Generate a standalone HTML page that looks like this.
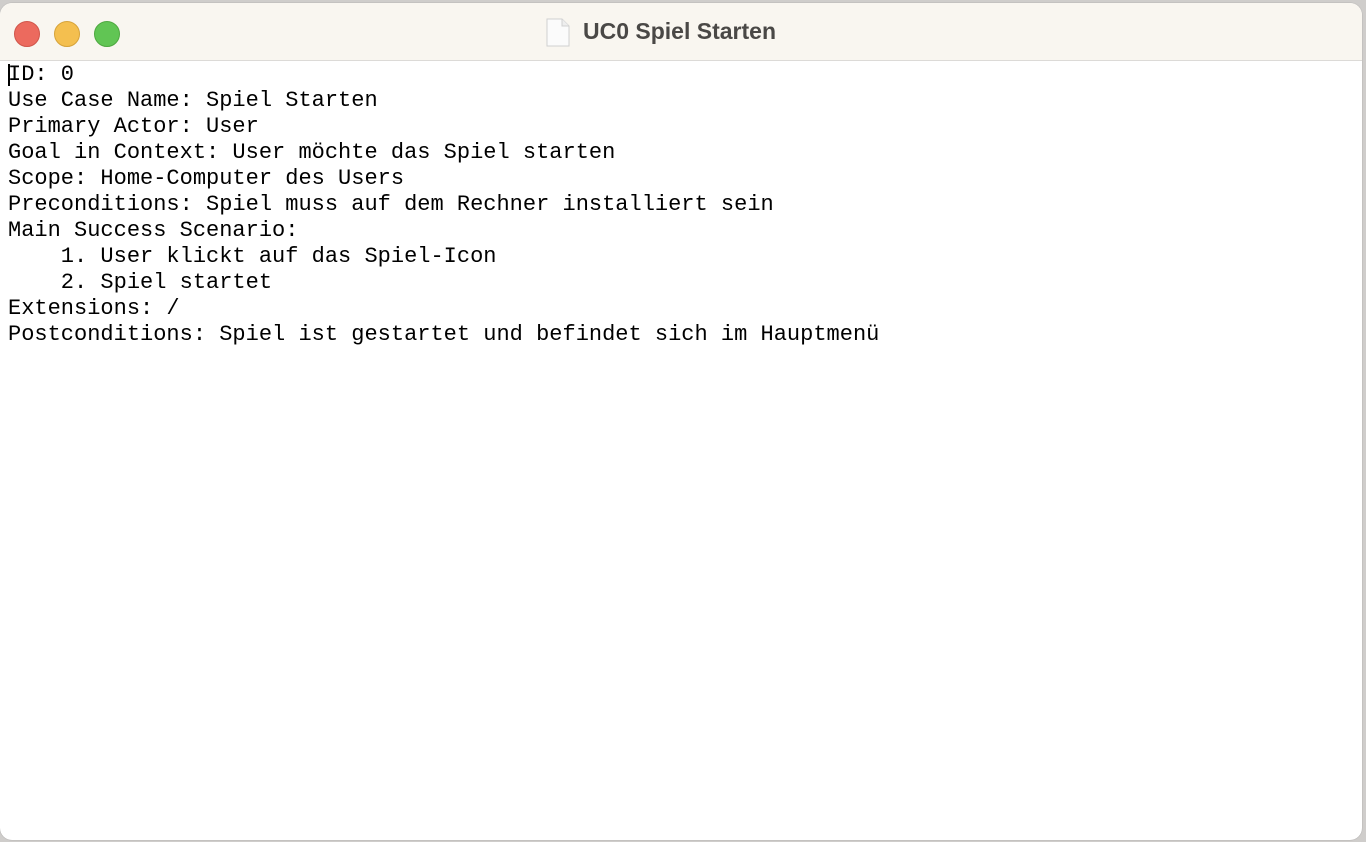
<!DOCTYPE html>
<html><head><meta charset="utf-8"><style>
html,body{margin:0;padding:0;width:1366px;height:842px;overflow:hidden;background:#cfcdcb;}
.win{position:absolute;left:0;top:3px;width:1362px;height:837px;background:#fff;border-radius:12px;overflow:hidden;box-shadow:0 0 1px #888;}
.tb{position:absolute;left:0;top:0;width:100%;height:57px;background:#f9f6f0;border-bottom:1px solid #dcdad7;}
.dot{position:absolute;top:18px;width:24px;height:24px;border-radius:50%;}
.title{position:absolute;left:583px;top:15px;font:bold 23px "Liberation Sans",sans-serif;color:#4a4846;}
.doc{position:absolute;left:546px;top:15px;width:24px;height:29px;}
pre{position:absolute;left:8px;top:59px;margin:0;font:22px/26px "Liberation Mono",monospace;color:#000;}
.caret{position:absolute;left:8px;top:61px;width:2px;height:22px;background:#000;}
</style></head><body>
<div class="win">
<div class="tb">
<div class="dot" style="left:14px;background:#ec6a5e;border:0.5px solid #d0564b"></div>
<div class="dot" style="left:54px;background:#f4bf4f;border:0.5px solid #d6a33a"></div>
<div class="dot" style="left:94px;background:#61c554;border:0.5px solid #4ea840"></div>
<svg class="doc" viewBox="0 0 24 29"><path d="M1 1h15l7 7v20H1z" fill="#fbfbfb" stroke="#d0d0d0"/><path d="M16 1v7h7" fill="#eee" stroke="#d0d0d0"/></svg>
<div class="title">UC0 Spiel Starten</div>
</div>
<pre>ID: 0
Use Case Name: Spiel Starten
Primary Actor: User
Goal in Context: User möchte das Spiel starten
Scope: Home-Computer des Users
Preconditions: Spiel muss auf dem Rechner installiert sein
Main Success Scenario:
    1. User klickt auf das Spiel-Icon
    2. Spiel startet
Extensions: /
Postconditions: Spiel ist gestartet und befindet sich im Hauptmenü</pre>
<div class="caret"></div>
</div>
</body></html>
